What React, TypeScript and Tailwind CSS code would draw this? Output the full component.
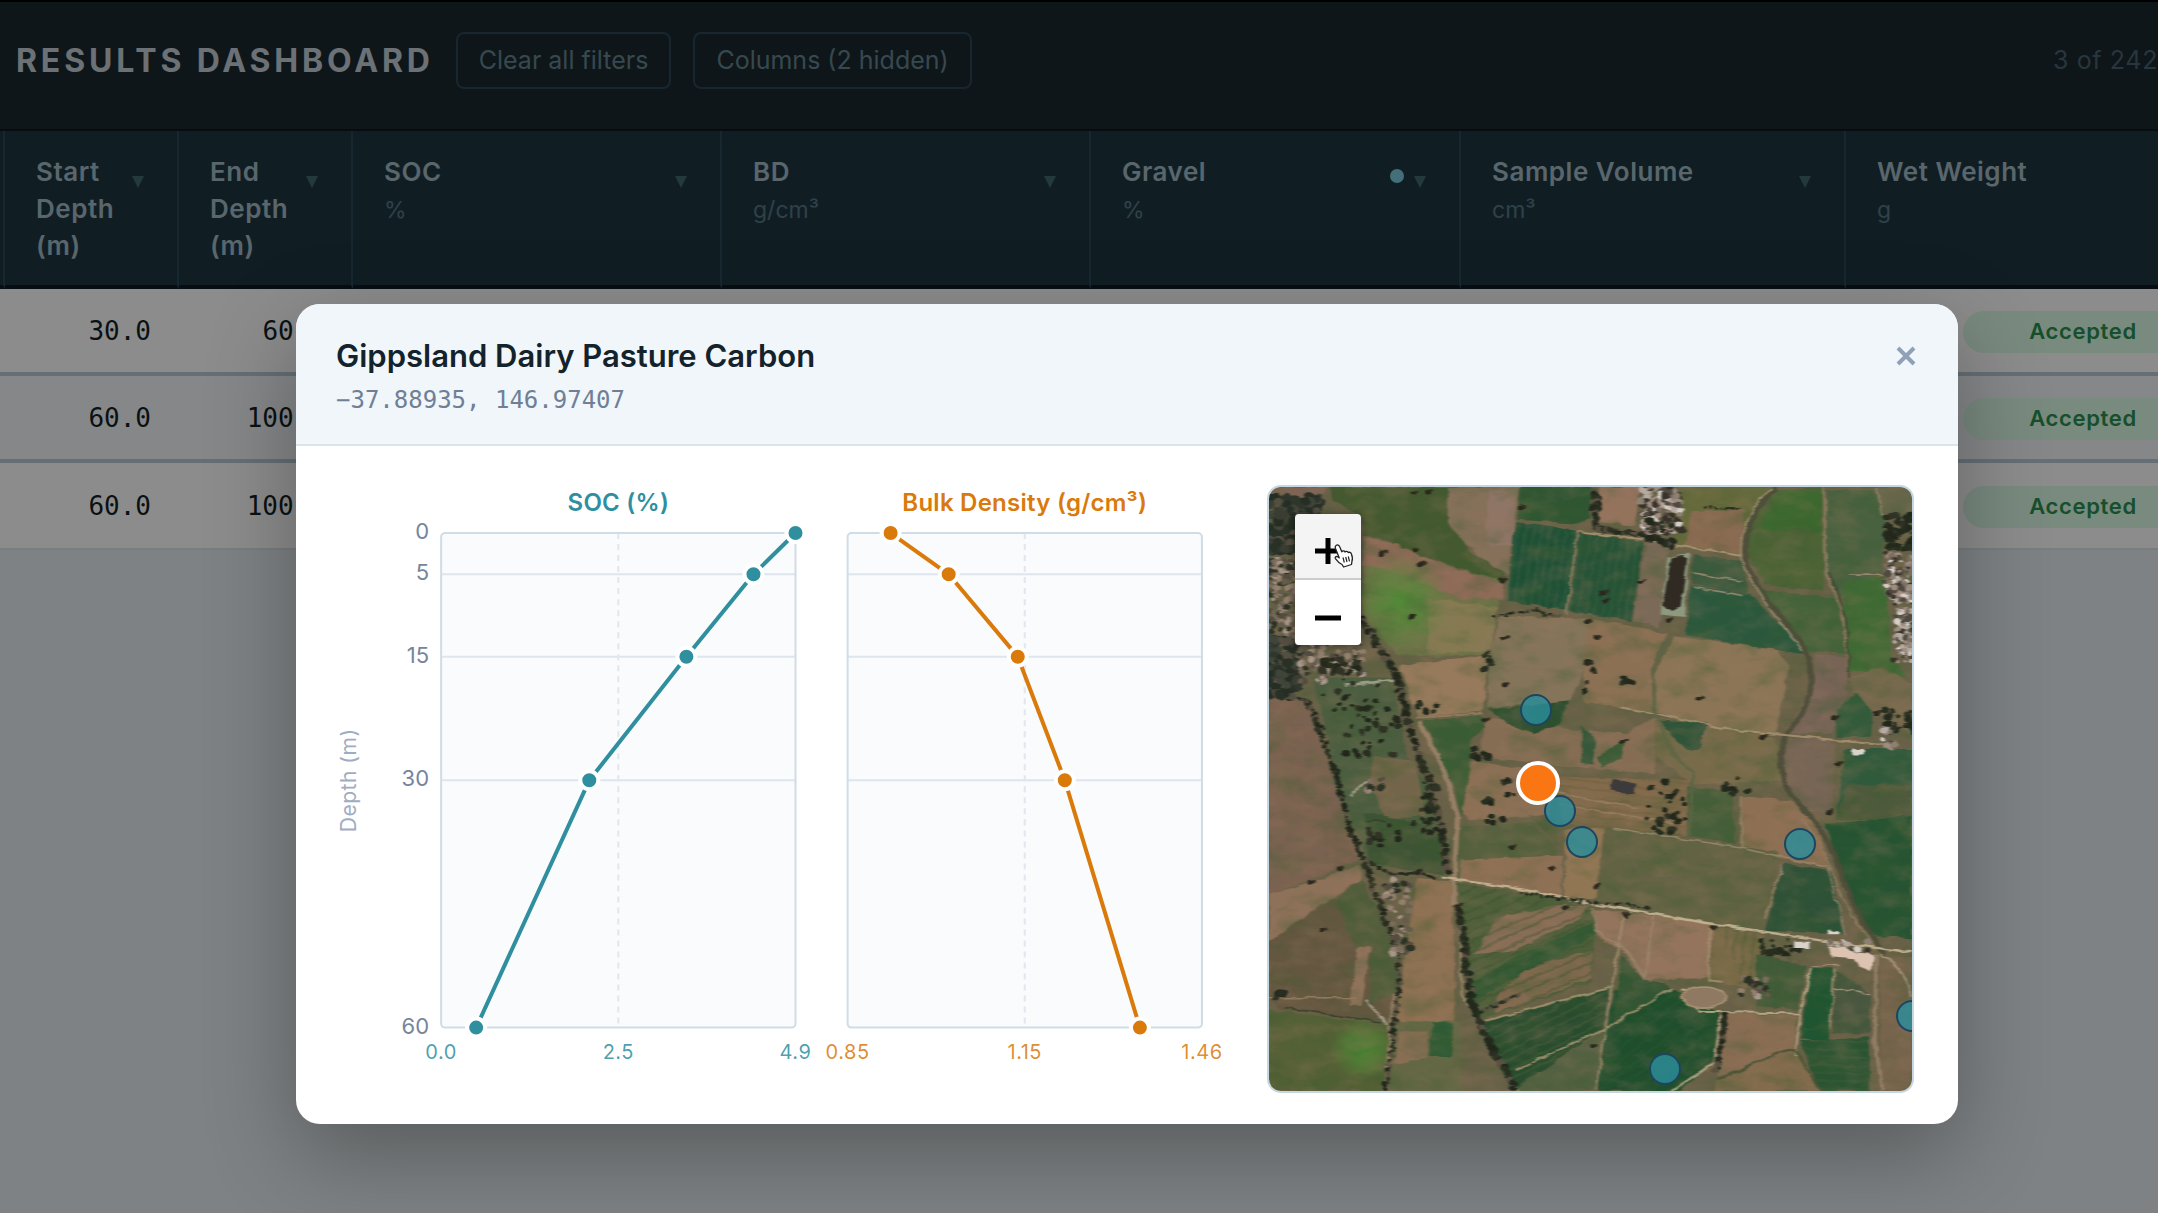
import React from "react";

type Point = [number, number];

const MONO = "font-['DejaVu_Sans_Mono',monospace]";

/* ---------- Table data ---------- */

interface Column {
  title: string[];
  unit?: string;
  width: string;
  active?: boolean;
}

const COLUMNS: Column[] = [
  { title: ["Start", "Depth", "(m)"], width: "w-[174px]" },
  { title: ["End", "Depth", "(m)"], width: "w-[174px]" },
  { title: ["SOC"], unit: "%", width: "w-[369px]" },
  { title: ["BD"], unit: "g/cm³", width: "w-[369px]" },
  { title: ["Gravel"], unit: "%", width: "w-[370px]", active: true },
  { title: ["Sample Volume"], unit: "cm³", width: "w-[385px]" },
  { title: ["Wet Weight"], unit: "g", width: "w-[474px]" },
];

const ROWS = [
  { start: "30.0", end: "60.0", status: "Accepted" },
  { start: "60.0", end: "100.0", status: "Accepted" },
  { start: "60.0", end: "100.0", status: "Accepted" },
];

/* ---------- Depth profile charts ---------- */

const DEPTHS = [0, 5, 15, 30, 60];
const TOP = 48;
const depthY = (d: number) => TOP + (d / 60) * 494;

interface Series {
  title: string;
  x: number;
  color: string;
  ticks: string[];
  values: number[];
}

const SERIES: Series[] = [
  { title: "SOC (%)", x: 104, color: "#2f8f9f", ticks: ["0.0", "2.5", "4.9"], values: [354, 312, 245, 148, 35] },
  { title: "Bulk Density (g/cm³)", x: 510, color: "#d97a0b", ticks: ["0.85", "1.15", "1.46"], values: [43, 101, 170, 217, 292] },
];

function ProfilePlot({ series }: { series: Series }) {
  const { x, color, values, ticks, title } = series;
  const pts = values.map((v, i) => [x + v, depthY(DEPTHS[i])] as Point);
  return (
    <g>
      <text x={x + 177} y={26} textAnchor="middle" fill={color} className="text-[24px] font-semibold tracking-[0.01em]">
        {title}
      </text>
      <rect x={x} y={TOP} width={354} height={494} rx={4} fill="#f9fbfd" />
      {[5, 15, 30].map((d) => (
        <line key={d} x1={x} x2={x + 354} y1={depthY(d)} y2={depthY(d)} stroke="#dfe5ee" strokeWidth={2} />
      ))}
      <line x1={x + 177} x2={x + 177} y1={TOP} y2={TOP + 494} stroke="#e2e6ee" strokeWidth={2} strokeDasharray="6 5" />
      <rect x={x} y={TOP} width={354} height={494} rx={4} fill="none" stroke="#d0dde6" strokeWidth={2} />
      <polyline points={pts.map((p) => p.join(",")).join(" ")} fill="none" stroke={color} strokeWidth={4} strokeLinejoin="round" />
      {pts.map(([cx, cy]) => (
        <circle key={cy} cx={cx} cy={cy} r={9} fill={color} stroke="#ffffff" strokeWidth={4} />
      ))}
      {ticks.map((t, i) => (
        <text key={t} x={x + i * 177} y={573} textAnchor="middle" fill={color} fillOpacity={0.85} className="text-[20px] tracking-wide">
          {t}
        </text>
      ))}
    </g>
  );
}

function DepthProfile() {
  return (
    <svg viewBox="0 0 891 607" className="h-auto min-w-0 flex-1 overflow-visible font-['Inter',sans-serif]" role="img" aria-label="Depth profile">
      <text transform="translate(19 295) rotate(-90)" textAnchor="middle" fill="#9fadc2" className="text-[21px] tracking-wide">
        Depth (m)
      </text>
      {DEPTHS.map((d) => (
        <text key={d} x={92} y={depthY(d) + 6} textAnchor="end" fill="#76859b" className="text-[22px]">
          {d}
        </text>
      ))}
      {SERIES.map((s) => (
        <ProfilePlot key={s.title} series={s} />
      ))}
    </svg>
  );
}

/* ---------- Satellite map ---------- */

const FIELDS: [string, string][] = [
  ["#44592f", "170,17 460,17 470,110 500,180 580,230 580,262 470,220 380,190 300,150 245,140 240,90 170,50"],
  ["#7d6454", "22,17 165,17 140,55 90,50 22,35"],
  ["#85705a", "450,17 620,17 600,120 590,240 520,190 445,110"],
  ["#8f7566", "545,25 612,25 600,165 535,165"],
  ["#2f5632", "620,17 790,17 785,95 755,110 612,100"],
  ["#1f5036", "608,106 752,128 728,330 588,304"],
  ["#265236", "760,132 912,158 884,356 736,330"],
  ["#94735d", "810,17 905,17 890,115 800,105"],
  ["#666a3c", "1000,17 1220,17 1160,100 1150,190 985,165"],
  ["#876a50", "1025,80 1150,75 1150,185 1010,165"],
  ["#4c6336", "1225,25 1345,20 1340,280 1200,265 1160,190 1165,110"],
  ["#3d682f", "1232,30 1335,30 1330,128 1185,125"],
  ["#48613f", "1350,25 1460,25 1485,90 1480,240 1370,300 1345,230"],
  ["#66664a", "1465,17 1550,17 1550,90 1485,90"],
  ["#7b6a58", "920,155 975,165 950,370 885,355"],
  ["#3c5a3e", "1030,190 1150,205 1160,290 1025,262"],
  ["#2b583d", "1025,265 1165,290 1290,420 1290,440 1010,392"],
  ["#45633a", "1175,275 1375,300 1395,440 1300,430 1220,330"],
  ["#406a34", "1385,260 1490,245 1500,440 1540,500 1400,480"],
  ["#6f7348", "245,200 380,215 575,250 562,340 540,440 420,445 320,440 245,330"],
  ["#8d6b57", "250,145 310,155 380,190 470,225 580,262 575,300 480,300 300,225 245,215"],
  ["#857a52", "400,300 565,320 550,430 400,440"],
  ["#977a5c", "330,470 545,440 530,585 375,600 345,510"],
  ["#84745a", "570,345 780,350 770,480 735,560 540,575 550,430"],
  ["#8b7054", "780,350 970,385 930,480 935,590 770,560 770,430"],
  ["#8b7556", "985,395 1230,430 1260,470 1225,640 1130,640 940,585 940,490"],
  ["#776456", "1320,440 1395,450 1395,540 1360,640 1250,640 1310,520"],
  ["#76694d", "1400,500 1480,470 1550,520 1550,640 1420,560"],
  ["#335b3b", "1370,580 1420,540 1455,580 1450,650 1370,650"],
  ["#776555", "1245,650 1370,660 1360,840 1310,840 1260,790 1235,710"],
  ["#305a3c", "1390,680 1550,680 1550,860 1370,860"],
  ["#4d5a3b", "1395,770 1550,770 1550,860 1370,860"],
  ["#265432", "1345,870 1550,850 1550,1160 1450,1150 1370,960"],
  ["#7a6250", "22,550 115,560 150,680 190,820 240,960 22,1050"],
  ["#8e7159", "22,1050 240,975 240,1010 22,1165"],
  ["#645740", "22,1165 240,1015 300,1130 330,1300 300,1370 50,1340 22,1310"],
  ["#515d3b", "180,1060 240,1010 320,1170 330,1290 260,1330 265,1180 225,1180"],
  ["#90725a", "232,1180 264,1182 240,1330 214,1330"],
  ["#546035", "22,1340 310,1380 290,1545 22,1545"],
  ["#3b5c35", "390,610 520,595 550,610 500,660 500,760 480,850 455,760"],
  ["#4c5e40", "125,500 315,500 350,700 410,780 440,1000 260,970 190,780"],
  ["#726549", "270,700 370,710 395,850 300,860 260,760"],
  ["#3c5433", "245,840 430,880 440,1000 260,965"],
  ["#8f7153", "375,1010 455,1015 465,1270 460,1375 325,1370 345,1200"],
  ["#636744", "320,1370 480,1370 480,1545 310,1545"],
  ["#886e54", "330,1395 400,1395 400,1460 320,1480"],
  ["#2e5b35", "410,1370 460,1375 455,1460 405,1460"],
  ["#856d54", "540,600 740,630 870,640 940,600 940,745 700,720 520,700"],
  ["#2b4f30", "545,580 735,560 710,620 650,640 590,615"],
  ["#36583a", "765,620 800,660 790,720 765,715"],
  ["#3c5c38", "800,700 870,655 860,700 815,725"],
  ["#776b4a", "940,600 1225,650 1240,760 1030,770 940,700"],
  ["#30543a", "945,605 1065,615 1045,680 1010,680"],
  ["#8c7055", "505,710 690,740 690,850 500,860 480,830"],
  ["#826a4b", "700,750 1020,760 1020,900 720,870"],
  ["#465f3a", "1015,775 1120,785 1130,920 1015,900"],
  ["#8d6f53", "1145,800 1260,810 1330,880 1350,980 1240,960 1140,930"],
  ["#58613f", "475,880 700,860 725,1060 470,1010"],
  ["#8e7055", "480,960 720,950 730,1060 475,1010"],
  ["#907653", "725,885 820,880 800,1060 725,1060"],
  ["#626343", "825,880 1230,940 1200,1140 800,1070"],
  ["#2e5237", "1245,970 1360,990 1390,1150 1200,1140"],
  ["#4f5f3b", "470,1020 725,1060 800,1100 790,1270 510,1370 470,1100"],
  ["#896e56", "560,1110 700,1075 780,1075 760,1110 600,1190 510,1200"],
  ["#80694e", "560,1310 640,1230 790,1190 790,1260 560,1350"],
  ["#335a34", "490,1280 620,1200 790,1120 800,1150 620,1250 510,1320"],
  ["#94745d", "795,1085 1080,1120 1065,1260 910,1265 870,1200 800,1150"],
  ["#786a46", "1080,1130 1200,1150 1180,1290 1070,1265"],
  ["#294c2f", "530,1370 830,1285 815,1390 600,1545 570,1490"],
  ["#536142", "620,1530 810,1400 800,1545 610,1545"],
  ["#1f4e2d", "845,1290 980,1285 1090,1350 1075,1470 1000,1545 805,1545 815,1395"],
  ["#335534", "860,1200 910,1262 980,1285 840,1385"],
  ["#896d53", "1110,1350 1275,1355 1270,1440 1090,1510"],
  ["#826b4d", "1085,1520 1270,1440 1330,1545 1080,1545"],
  ["#415c39", "1180,1200 1300,1230 1280,1340 1180,1330"],
  ["#1f5531", "1310,1235 1365,1235 1350,1420 1285,1415"],
  ["#46563f", "1370,1240 1450,1300 1450,1400 1360,1400"],
  ["#2a5431", "1285,1420 1450,1410 1450,1545 1330,1545"],
  ["#77644c", "1475,1200 1550,1210 1550,1545 1475,1545"],
];

/* [colour, width, path] */
const TRACKS: [string, number, string][] = [
  ["#a99676", 5, "M755 128 L1010 168 L1155 190"],
  ["#968869", 4, "M755 128 L728 340"],
  ["#4d4d38", 13, "M1225 20 C1170 80 1150 130 1156 200 C1170 270 1230 320 1296 430 C1330 520 1300 580 1255 640 C1215 720 1250 790 1300 840 C1370 920 1380 1010 1420 1090 C1440 1140 1470 1170 1485 1200"],
  ["#a59479", 4, "M1215 20 C1160 80 1142 130 1147 200 C1165 270 1220 330 1288 432"],
  ["#958063", 4, "M1290 860 C1350 930 1360 1010 1400 1090 L1465 1190"],
  ["#8f7c61", 7, "M1342 20 L1345 230 L1385 330 L1400 480"],
  ["#3d4630", 5, "M1352 230 L1392 340 L1402 500"],
  ["#9c8b74", 4, "M1465 20 L1480 95 M1400 240 L1490 240 M1030 270 L1150 292 M1030 235 L1145 255"],
  ["#a69271", 5, "M860 575 L940 590 L1110 630 L1250 645 L1480 670"],
  ["#5c6646", 7, "M975 400 L935 480 L940 590 L980 690 L1030 740 L1020 900"],
  ["#9c8368", 12, "M380 610 L440 740 L470 850 L462 1010 L462 1080"],
  ["#c6b795", 6, "M430 1005 L620 1035 L780 1070 L1060 1120 L1300 1160 L1550 1195"],
  ["#a5926f", 5, "M475 1080 L480 1300 L530 1390 L610 1545"],
  ["#a3926f", 5, "M530 1370 L830 1285 M610 1490 L820 1390 L980 1285"],
  ["#a38f70", 5, "M865 1100 L835 1290 L800 1545"],
  ["#9b886e", 4, "M790 1080 L800 1140 L880 1200 L915 1262 M935 1105 L915 1260"],
  ["#bdac89", 5, "M1000 1285 L1045 1345 L1285 1350 L1310 1235 M1285 1350 L1272 1460 M1095 1355 L1078 1475 L980 1545"],
  ["#968067", 9, "M1465 1200 L1462 1420 L1480 1545"],
  ["#a89679", 4, "M1365 1285 L1450 1302 M1365 1235 L1355 1390 M1310 1230 L1380 1225"],
  ["#a89679", 5, "M1475 1200 C1520 1230 1545 1270 1550 1310"],
  ["#4a5335", 6, "M1090 1515 C1150 1500 1200 1450 1270 1442 L1335 1545"],
  ["#98886b", 4, "M840 880 L1140 930 L1350 980 L1390 1150 M1245 970 L1200 1110 M1145 800 L1145 930"],
  ["#66634a", 5, "M830 880 L910 1005 L1010 1010 M640 850 L725 950 L720 1060"],
  ["#a38f6c", 5, "M1068 1130 L1068 1265 L1100 1270"],
  ["#a7a28e", 6, "M250 1315 L305 1378 M215 800 L260 760 M200 520 L320 505"],
  ["#978168", 6, "M320 1300 L308 1400 L300 1545"],
  ["#33402a", 4, "M60 1335 L290 1372 M245 860 L300 865"],
  ["#967e61", 4, "M710 820 L1000 870 M700 790 L900 830 M370 602 L530 590 M22 1310 L230 1310"],
];

const HEDGES: [number, number, string][] = [
  [4, 8, "115,560 145,640 185,760 210,870 250,970 290,1090 335,1210"],
  [6, 10, "245,350 290,430 335,520 355,630 400,750 430,880 450,1000"],
  [6, 10, "465,1080 483,1130 492,1240 510,1350 560,1450 605,1545"],
  [4, 6, "260,965 310,995 380,995 420,1010"],
  [4, 7, "330,1210 330,1310 315,1420 300,1545"],
  [3, 5, "620,1045 700,1058 790,1068 930,1082"],
  [7, 11, "798,30 800,120 860,130 925,140 985,170"],
  [3, 5, "565,345 600,335 650,330 720,345"],
  [3, 5, "22,550 60,550 115,560"],
  [6, 8, "1105,1355 1095,1420 1085,1500"],
  [4, 6, "510,1350 560,1330 620,1300"],
  [2, 4, "1055,68 1100,70 1150,75"],
];

/* [centre x, centre y, spread x, spread y, count, palette] */
const CLUSTERS: [number, number, number, number, number, "tree" | "wood" | "scrub" | "roof"][] = [
  [80, 110, 62, 70, 200, "wood"],
  [60, 300, 40, 100, 200, "scrub"],
  [55, 470, 38, 78, 120, "wood"],
  [120, 450, 35, 60, 60, "scrub"],
  [185, 450, 60, 50, 70, "scrub"],
  [190, 470, 45, 20, 26, "tree"],
  [955, 75, 48, 60, 150, "roof"],
  [950, 130, 50, 30, 12, "tree"],
  [1518, 130, 32, 45, 60, "tree"],
  [1520, 240, 32, 60, 80, "roof"],
  [1530, 360, 25, 100, 110, "roof"],
  [1525, 610, 40, 28, 34, "tree"],
  [1490, 655, 24, 30, 10, "roof"],
  [330, 900, 75, 35, 12, "tree"],
  [240, 570, 90, 70, 32, "tree"],
  [260, 650, 60, 50, 16, "tree"],
  [400, 830, 20, 65, 24, "tree"],
  [405, 575, 40, 14, 9, "tree"],
  [525, 690, 20, 16, 8, "tree"],
  [570, 790, 38, 30, 9, "tree"],
  [560, 860, 22, 10, 5, "tree"],
  [548, 455, 14, 24, 9, "tree"],
  [965, 825, 48, 66, 28, "tree"],
  [1135, 770, 32, 24, 8, "tree"],
  [780, 500, 22, 46, 7, "tree"],
  [874, 505, 12, 18, 5, "tree"],
  [1235, 1180, 50, 20, 24, "tree"],
  [1175, 1280, 36, 26, 20, "scrub"],
  [330, 1050, 34, 40, 26, "scrub"],
  [335, 1150, 24, 50, 32, "scrub"],
  [1400, 1185, 50, 18, 20, "roof"],
  [45, 1305, 12, 8, 8, "tree"],
  [270, 770, 20, 20, 12, "scrub"],
];

const LONE_TREES: Point[] = [
  [292, 186], [368, 176], [380, 214], [575, 252], [365, 32], [400, 30], [620, 70], [358, 346], [580, 400], [800, 398],
  [776, 466], [580, 518], [535, 608], [1045, 554], [1192, 648], [862, 660], [1365, 602], [1466, 590], [1372, 718],
  [1350, 838], [815, 285], [820, 305], [904, 256], [600, 930], [690, 986], [118, 1020], [188, 986], [800, 1028],
  [724, 1084], [150, 1140], [1076, 1132], [870, 1100], [790, 1434], [375, 990], [470, 1080], [780, 358], [970, 355],
];

const PALETTES = {
  tree: ["#232a1d", "#282f20", "#303325", "#22271c"],
  wood: ["#252e24", "#2f372c", "#3a3d32", "#293026", "#554e42", "#40453a"],
  scrub: ["#2c3225", "#544c40", "#7b6c5d", "#93806e", "#665c4c", "#a8968a"],
  roof: ["#b6aaa2", "#d6cec8", "#7c6d62", "#9f8c7e", "#37332b", "#8e8174", "#4f493f"],
};

function createRandom(seed: number) {
  let s = seed;
  return () => {
    s = (s * 16807) % 2147483647;
    return s / 2147483647;
  };
}

interface Blob {
  x: number;
  y: number;
  r: number;
  fill: string;
}

function growVegetation(): Blob[] {
  const rand = createRandom(4271);
  const blobs: Blob[] = [];
  const pick = (list: string[]) => list[Math.floor(rand() * list.length)];
  for (const [min, max, line] of HEDGES) {
    const pts = line.split(" ").map((p) => p.split(",").map(Number));
    for (let i = 0; i < pts.length - 1; i++) {
      const [ax, ay] = pts[i];
      const [bx, by] = pts[i + 1];
      const steps = Math.ceil(Math.hypot(bx - ax, by - ay) / 6);
      for (let s = 0; s < steps; s++) {
        const t = s / steps;
        blobs.push({
          x: ax + (bx - ax) * t + (rand() - 0.5) * 10,
          y: ay + (by - ay) * t + (rand() - 0.5) * 6,
          r: min + rand() * (max - min),
          fill: rand() > 0.8 ? "#5b5142" : pick(PALETTES.tree),
        });
      }
    }
  }
  for (const [cx, cy, sx, sy, n, kind] of CLUSTERS) {
    for (let i = 0; i < n; i++) {
      blobs.push({
        x: cx + (rand() * 2 - 1) * sx,
        y: cy + (rand() * 2 - 1) * sy,
        r: (kind === "wood" ? 8 : 4) + rand() * 6,
        fill: pick(PALETTES[kind]),
      });
    }
  }
  for (const [x, y] of LONE_TREES) {
    blobs.push({ x, y, r: 7, fill: "#2a271d" }, { x: x + 8, y: y - 4, r: 5, fill: "#332f22" });
  }
  return blobs;
}

const VEGETATION = growVegetation();

/* Crop rows: clip to a field and rule parallel furrows across it */
const FURROWS: { id: string; area: string; angle: number; color: string; gap: number }[] = [
  { id: "f1", area: "608,106 912,158 884,356 588,304", angle: 8, color: "#3d6846", gap: 19 },
  { id: "f2", area: "470,1020 790,1080 790,1270 510,1370", angle: 65, color: "#34502c", gap: 24 },
  { id: "f3", area: "530,1370 830,1285 815,1390 600,1545 570,1490", angle: 62, color: "#54683f", gap: 22 },
  { id: "f4", area: "700,750 1020,760 1020,900 720,870", angle: 97, color: "#6b5e40", gap: 22 },
  { id: "f5", area: "1080,1130 1200,1150 1300,1230 1280,1340 1180,1330", angle: 5, color: "#48563a", gap: 22 },
  { id: "f6", area: "1285,1420 1450,1410 1450,1545 1330,1545", angle: 92, color: "#446045", gap: 20 },
  { id: "f7", area: "845,1290 980,1285 1090,1350 1075,1470 1000,1545 805,1545", angle: 50, color: "#2c5c34", gap: 26 },
];

function Terrain() {
  return (
    <svg viewBox="22 17 1528 1528" preserveAspectRatio="none" className="absolute inset-0 h-full w-full" aria-hidden="true">
      <defs>
        <filter id="soften" x="0" y="0" width="100%" height="100%" colorInterpolationFilters="sRGB">
          <feTurbulence type="fractalNoise" baseFrequency="0.03" numOctaves="3" seed="6" result="warp" />
          <feDisplacementMap in="SourceGraphic" in2="warp" scale="14" xChannelSelector="R" yChannelSelector="G" />
          <feGaussianBlur stdDeviation="2" />
        </filter>
        <filter id="mottle" x="0" y="0" width="100%" height="100%" colorInterpolationFilters="sRGB">
          <feTurbulence type="fractalNoise" baseFrequency="0.012 0.02" numOctaves="5" seed="11" />
          <feColorMatrix values="0 0 0 0 0.22  0 0 0 0 0.36  0 0 0 0 0.18  2.6 0 0 0 -1.2" />
        </filter>
        <filter id="dust" x="0" y="0" width="100%" height="100%" colorInterpolationFilters="sRGB">
          <feTurbulence type="fractalNoise" baseFrequency="0.014 0.024" numOctaves="5" seed="29" />
          <feColorMatrix values="0 0 0 0 0.6  0 0 0 0 0.47  0 0 0 0 0.37  0 2.6 0 0 -1.1" />
        </filter>
        {FURROWS.map((f) => (
          <clipPath key={f.id} id={f.id}>
            <polygon points={f.area} />
          </clipPath>
        ))}
        <radialGradient id="lush">
          <stop offset="0" stopColor="#4a8f33" stopOpacity="0.8" />
          <stop offset="0.5" stopColor="#4a8f33" stopOpacity="0.5" />
          <stop offset="1" stopColor="#4a8f33" stopOpacity="0" />
        </radialGradient>
      </defs>
      <g filter="url(#soften)">
        <rect x="0" y="0" width="1600" height="1600" fill="#686147" />
        {FIELDS.map(([fill, points]) => (
          <polygon key={points} points={points} fill={fill} />
        ))}
        {FURROWS.map((f) => (
          <g key={f.id} clipPath={`url(#${f.id})`} stroke={f.color} strokeWidth={6} opacity={0.35}>
            <g transform={`rotate(${f.angle} 800 800)`}>
              {Array.from({ length: Math.ceil(2800 / f.gap) }, (_, i) => (
                <line key={i} x1={-600 + i * f.gap} x2={-600 + i * f.gap} y1={-700} y2={2300} />
              ))}
            </g>
          </g>
        ))}
        <ellipse cx="335" cy="310" rx="110" ry="125" fill="url(#lush)" />
        <ellipse cx="245" cy="1440" rx="80" ry="80" fill="url(#lush)" />
        <rect x="0" y="0" width="1600" height="1600" filter="url(#mottle)" opacity="0.35" />
        <rect x="0" y="0" width="1600" height="1600" filter="url(#dust)" opacity="0.25" />
        {TRACKS.map(([stroke, width, d]) => (
          <path key={d} d={d} fill="none" stroke={stroke} strokeWidth={width} strokeLinejoin="round" opacity={0.9} />
        ))}
        <ellipse cx="1055" cy="1308" rx="52" ry="28" fill="#8f7962" stroke="#a89474" strokeWidth="4" />
        <path d="M972 192 L1022 188 L1008 346 L950 340 Z" fill="#8e9a80" />
        <path d="M978 196 Q1000 186 1016 200 L1000 322 Q980 334 956 320 Z" fill="#302a22" />
        <path d="M838 755 L895 768 L890 795 L834 785 Z" fill="#3d3a3b" />
        {VEGETATION.map((b, i) => (
          <ellipse key={i} cx={b.x} cy={b.y} rx={b.r} ry={b.r * 0.85} fill={b.fill} />
        ))}
        <path d="M1350 1180 L1390 1185 L1420 1195 L1460 1200 L1455 1240 L1420 1230 L1410 1210 L1355 1205 Z" fill="#dcc3b2" />
        <path d="M1410 680 h26 v14 h-26 Z M1270 1168 h36 v16 h-36 Z M1350 1140 h28 v9 h-28 Z" fill="#d9d3cb" />
      </g>
    </svg>
  );
}

const SITES: { x: number; y: number }[] = [
  { x: 657, y: 582 },
  { x: 714, y: 838 },
  { x: 766, y: 915 },
  { x: 1285, y: 920 },
  { x: 1549, y: 1356 },
  { x: 963, y: 1490 },
];

const place = (x: number, y: number) => ({
  left: `${((x - 22) / 1528) * 100}%`,
  top: `${((y - 17) / 1528) * 100}%`,
});

function PointerCursor() {
  return (
    <svg viewBox="0 0 22 26" className="pointer-events-none absolute top-[56px] left-[64px] h-[26px] w-[22px]" aria-hidden="true">
      <path
        d="M3 2.6C4.600 1.400 6 2 6.600 3.600L8.800 8.800C9.400 7.700 11.400 7.600 12 9C12.800 8 14.700 8.200 15.200 9.600C16.300 8.900 18 9.400 18.400 10.900C19.500 13.600 19.900 16 18.900 18.600L18.500 21.500L10.600 24L9 21.500C6.800 20.400 4.600 18.600 2.400 15.600C1.600 14.200 3.200 13 4.700 13.800L6.300 14.900L2.400 5.200C2 4.100 2.200 3.200 3 2.600Z"
        fill="#ffffff"
        stroke="#222222"
        strokeWidth="1.300"
        strokeLinejoin="round"
      />
      <path d="M10 14.500 L11.300 19.500 M12.700 14 L14 19 M15.300 13.500 L16.500 18.300" stroke="#222222" strokeWidth="1.200" />
    </svg>
  );
}

function SiteMap() {
  return (
    <div className="relative w-[647px] shrink-0 overflow-hidden rounded-[14px] border-2 border-[#c5d8e2]">
      <Terrain />
      {SITES.map((s) => (
        <button
          key={`${s.x}-${s.y}`}
          type="button"
          aria-label="Sample site"
          className="absolute size-8 -translate-x-1/2 -translate-y-1/2 rounded-full border-2 border-[#1d4560] bg-[#2b8f9c]/80"
          style={place(s.x, s.y)}
        />
      ))}
      <button
        type="button"
        aria-label="Selected site"
        className="absolute size-11 -translate-x-1/2 -translate-y-1/2 rounded-full border-4 border-white bg-[#f97613]"
        style={place(661, 765)}
      />
      <div className="absolute top-[27px] left-[26px] flex w-[66px] flex-col overflow-hidden rounded-[4px] shadow-[0_1px_8px_rgba(0,0,0,0.5)]">
        <button type="button" aria-label="Zoom in" className="flex h-[66px] items-center justify-center border-b-2 border-[#cccccc] bg-[#f4f4f4] pt-[10px]">
          <svg viewBox="0 0 28 28" className="size-7" aria-hidden="true">
            <path d="M14 1V27M1 14H27" stroke="#000000" strokeWidth="5" />
          </svg>
        </button>
        <button type="button" aria-label="Zoom out" className="flex h-[65px] items-center justify-center bg-white pt-[10px]">
          <svg viewBox="0 0 28 28" className="size-7" aria-hidden="true">
            <path d="M1 14H27" stroke="#000000" strokeWidth="5" />
          </svg>
        </button>
      </div>
      <PointerCursor />
    </div>
  );
}

/* ---------- Page ---------- */

function TopBar() {
  return (
    <header className="flex h-[131px] items-center border-t-2 border-b-2 border-t-black border-b-[#0c1a22] bg-[#1a292f] pb-[10px] pl-4 whitespace-nowrap">
      <h1 className="mr-[22px] text-[32px] font-bold tracking-[0.12em] text-[#c3ced6]">RESULTS DASHBOARD</h1>
      <button type="button" className="mr-[22px] h-[57px] rounded-[8px] border-2 border-[#2b4557] px-[21px] text-[25px] text-[#64848f]">
        Clear all filters
      </button>
      <button type="button" className="h-[57px] rounded-[8px] border-2 border-[#2b4557] px-[21px] text-[25px] text-[#64848f]">
        Columns (2 hidden)
      </button>
      <p className="ml-auto text-[25px] tracking-wide text-[#4b6270]">3 of 242</p>
    </header>
  );
}

function ResultsTable() {
  return (
    <div className="overflow-hidden">
      <table className="w-[2318px] table-fixed border-separate border-spacing-0">
        <thead className="bg-[#1e3843]">
          <tr>
            <th className="w-[5px] border-r-2 border-b-4 border-r-[#2b4858] border-b-[#10191f]" aria-label="Row" />
            {COLUMNS.map((c) => (
              <th
                key={c.title.join(" ") + c.width}
                scope="col"
                className={`${c.width} h-[158px] border-r-2 border-b-4 border-r-[#2b4858] border-b-[#10191f] pt-[22px] pr-[33px] pl-[31px] text-left align-top font-normal`}
              >
                <div className="flex items-start justify-between">
                  <div>
                    <div className="text-[26px] leading-[37px] font-semibold tracking-[0.02em] text-[#a3bac4]">
                      {c.title.map((line) => (
                        <div key={line} className="whitespace-nowrap">{line}</div>
                      ))}
                    </div>
                    {c.unit && <div className="text-[23px] leading-10 text-[#567784]">{c.unit}</div>}
                  </div>
                  {c.title[0] !== "Wet Weight" && (
                    <button type="button" aria-label={`Filter ${c.title.join(" ")}`} className="mt-[17px] flex h-5 items-center gap-[10px]">
                      {c.active && <span className="mb-2 size-[14px] rounded-full bg-[#7ccbdd]" />}
                      <svg viewBox="0 0 12 12" className="mt-1 h-3 w-3" aria-hidden="true">
                        <path d="M0 0H12L6 12Z" fill="#42686f" />
                      </svg>
                    </button>
                  )}
                </div>
              </th>
            ))}
          </tr>
        </thead>
        <tbody className="text-[26px] text-[#131f26]">
          {ROWS.map((r, i) => {
            const line = i === 2 ? "border-b-2 border-[#dbe3e8]" : "border-b-4 border-[#b9cad6]";
            const tone = i === 1 ? "bg-[#f3f6f9]" : "bg-white";
            return (
              <tr key={i} className={tone}>
                <td className={line} />
                <td className={`${line} ${MONO} h-[87px] pt-[2px] pr-7 text-right`}>{r.start}</td>
                <td className={`${line} ${MONO} pt-[2px] pr-7 text-right`}>{r.end}</td>
                <td className={line} />
                <td className={line} />
                <td className={line} />
                <td className={line} />
                <td className={`${line} pt-[2px] text-center`}>
                  <span className="inline-flex h-[42px] w-60 items-center justify-center rounded-full bg-[#dcfce7] text-[22px] font-semibold tracking-[0.03em] text-[#2b9150]">
                    {r.status}
                  </span>
                </td>
              </tr>
            );
          })}
        </tbody>
      </table>
    </div>
  );
}

function SiteDialog() {
  return (
    <div className="absolute inset-0 bg-black/45 pt-[304px] pr-[200px] pl-[296px]">
      <section
        role="dialog"
        aria-modal="true"
        aria-labelledby="site-title"
        className="overflow-hidden rounded-[24px] bg-white shadow-[0_30px_90px_rgba(0,0,0,0.3)]"
      >
        <header className="flex items-start justify-between border-b-2 border-[#dbe4ed] bg-[#f0f6fa] pt-8 pr-10 pb-6 pl-10">
          <div>
            <h2 id="site-title" className="text-[31px] leading-10 font-semibold text-[#14232b]">
              Gippsland Dairy Pasture Carbon
            </h2>
            <p className={`mt-1 text-[24px] leading-10 text-[#6f8096] ${MONO}`}>−37.88935, 146.97407</p>
          </div>
          <button type="button" aria-label="Close" className="mt-2 flex size-6 items-center justify-center">
            <svg viewBox="0 0 20 20" className="size-5" aria-hidden="true">
              <path d="M2 2L18 18M18 2L2 18" stroke="#8fa0b7" strokeWidth="4" />
            </svg>
          </button>
        </header>
        <div className="flex gap-[38px] pt-[39px] pr-11 pb-[31px] pl-[41px]">
          <DepthProfile />
          <SiteMap />
        </div>
      </section>
    </div>
  );
}

export default function App() {
  return (
    <main className="relative min-h-screen overflow-hidden bg-[#e6edf0] font-['Inter',sans-serif]">
      <TopBar />
      <ResultsTable />
      <SiteDialog />
    </main>
  );
}
